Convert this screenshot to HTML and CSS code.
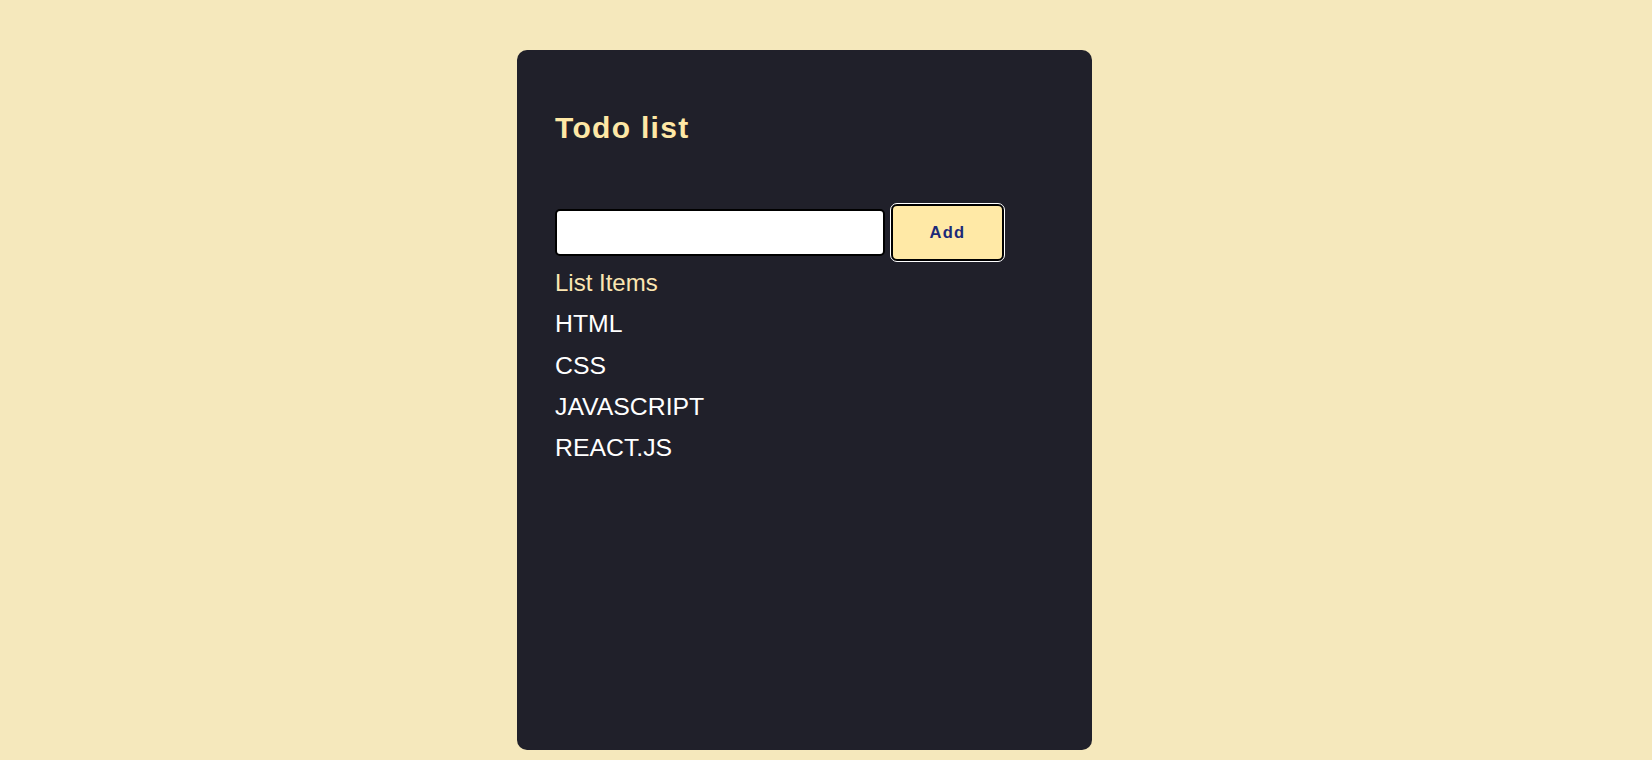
FILE: index.html
```html
<!DOCTYPE html>
<html lang="en">
<head>
<meta charset="utf-8">
<title>Todo list</title>
<link rel="stylesheet" href="styles.css">
</head>
<body>
<main class="card">
  <h1 class="title">Todo list</h1>
  <div class="form-row">
    <input class="todo-input" type="text">
    <button class="add-btn" type="button">Add</button>
  </div>
  <div class="list-heading">List Items</div>
  <ul class="todo-list">
    <li>HTML</li>
    <li>CSS</li>
    <li>JAVASCRIPT</li>
    <li>REACT.JS</li>
  </ul>
</main>
</body>
</html>
```

FILE: styles.css
```css
html, body {
  margin: 0;
  padding: 0;
}
body {
  background: #f5e8bc;
  font-family: "Liberation Sans", Arial, sans-serif;
  height: 760px;
  overflow: hidden;
}
.card {
  box-sizing: border-box;
  width: 575px;
  height: 700px;
  margin: 50px 0 0 517px;
  background: #20202a;
  border-radius: 10px;
  padding: 61px 38px;
}
.title {
  margin: 0 0 58px 0;
  font-size: 30px;
  line-height: 34px;
  font-weight: bold;
  letter-spacing: 1.3px;
  color: #ffe8a6;
}
.form-row {
  display: flex;
  align-items: center;
  gap: 6px;
}
.todo-input {
  box-sizing: border-box;
  width: 330px;
  height: 47px;
  margin: 0;
  border: 2px solid #000;
  border-radius: 5px;
  background: #fff;
  padding: 0 8px;
  font-size: 16px;
  outline: none;
}
.add-btn {
  box-sizing: border-box;
  width: 113px;
  height: 57px;
  margin: 1px 0;
  background: #ffe9a6;
  border: 2px solid #000;
  border-radius: 6px;
  outline: 1px solid #fff;
  color: #1c2a78;
  font-family: "Liberation Sans", Arial, sans-serif;
  font-weight: bold;
  font-size: 16.5px;
  letter-spacing: 1.3px;
  padding: 0;
}
.list-heading {
  font-size: 24px;
  line-height: 41.3px;
  color: #fbe6b2;
}
.todo-list {
  list-style: none;
  margin: 0;
  padding: 0;
}
.todo-list li {
  font-size: 24.8px;
  line-height: 41.3px;
  color: #ffffff;
}
```
